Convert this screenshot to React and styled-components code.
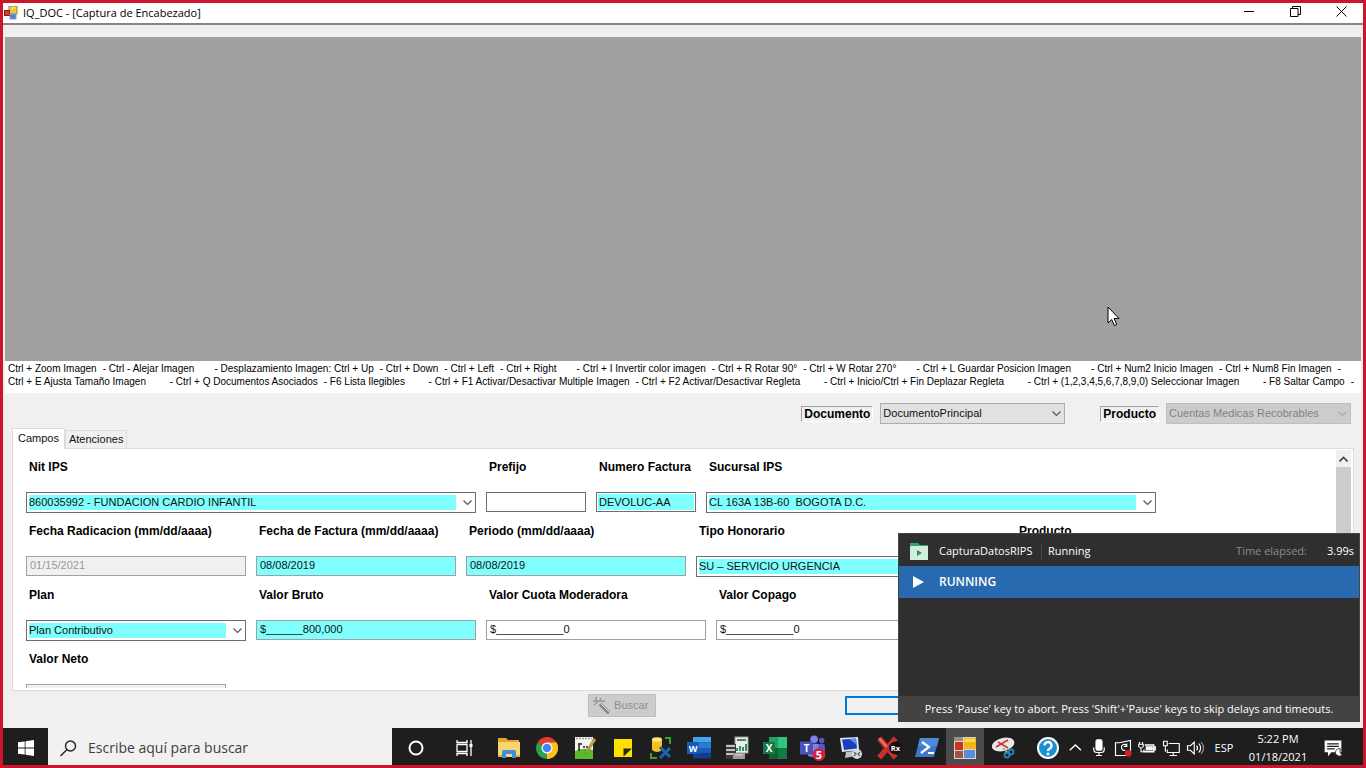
import React from "react";
import styled, { createGlobalStyle, css } from "styled-components";

const Global = createGlobalStyle`
  * { box-sizing: border-box; }
  body { margin: 0; background: #f0f0f0; }
  button, input, select { font: inherit; color: inherit; border-radius: 0; margin: 0; }
`;

const classic = '"Liberation Sans", Arial, sans-serif';
const segoe = '"Open Sans", "Noto Sans", sans-serif';

const Screen = styled.div`
  position: relative;
  display: flex;
  flex-direction: column;
  min-height: 100vh;
  border: 3px solid #cc142b;
  background: #f0f0f0;
  font: 11px/13px ${classic};
  color: #111;
`;

/* ---------- window ---------- */
const TitleBar = styled.header`
  display: flex;
  align-items: center;
  height: 22px;
  padding-left: 1px;
  background: #fff;
  border-bottom: 2px solid #858585;
`;
const Title = styled.h1`
  flex: 1;
  margin: 0 0 0 5px;
  font: 11px/16px ${segoe};
  color: #000;
`;
const WindowButton = styled.button`
  align-self: flex-start;
  width: 46px;
  height: 16px;
  padding: 0 0 0 2px;
  border: 0;
  background: none;
  display: grid;
  place-items: center;
`;
const Body = styled.main`
  flex: 1;
  display: flex;
  flex-direction: column;
  padding: 12px 2px 0;
`;
const Viewer = styled.section`
  position: relative;
  flex: 1;
  min-height: 120px;
  background: #a0a0a0;
`;
const Pointer = styled.svg`
  position: absolute;
  left: 1102px;
  top: 269px;
`;
const Hints = styled.div`
  padding: 1px 7px 5px 3px;
  background: #fff;
  font-size: 10px;
  color: #000;
`;
const HintLine = styled.p`
  display: flex;
  justify-content: space-between;
  margin: 0;
  padding-right: ${(p) => (p.$short ? 13 : 0)}px;
  white-space: nowrap;
`;
const HintGroup = styled.span`
  display: flex;
  gap: 6px;
`;

const Toolbar = styled.div`
  display: flex;
  justify-content: flex-end;
  gap: 35px;
  padding: 10px 10px 4px;
`;
const ToolGroup = styled.div`
  display: flex;
  align-items: center;
  gap: 7px;
`;
const ToolLabel = styled.label`
  padding: 0 2px;
  border: 1px solid #fff;
  border-top-color: #a0a0a0;
  border-left-color: #a0a0a0;
  font: bold 12px/14px ${classic};
  color: #000;
`;

/* ---------- fields ---------- */
const ComboFrame = styled.div`
  display: grid;
  align-items: center;
  width: ${(p) => p.$width}px;
`;
const ComboSelect = styled.select`
  grid-area: 1 / 1;
  width: 100%;
  height: 21px;
  appearance: none;
  outline: 0;
  border: 1px solid #6e6e6e;
  line-height: 15px;
  padding: 2px 19px 2px 2px;
  background: #fff;
  ${(p) => p.$tone === "cyan" && css`background: linear-gradient(#80ffff, #80ffff) content-box, #fff;`}
  ${(p) => p.$tone === "button" && css`background: #e1e1e1; border-color: #adadad;`}
  ${(p) => p.$tone === "off" && css`background: #ccc; border-color: #bfbfbf; color: #838383; opacity: 1;`}
`;
const ComboArrow = styled.svg`
  grid-area: 1 / 1;
  justify-self: end;
  margin-right: 4px;
  pointer-events: none;
`;
const TextBox = styled.input`
  width: ${(p) => p.$width}px;
  height: 20px;
  padding: 0 3px 2px;
  outline: 0;
  border: 1px solid ${(p) => (p.$dark ? "#6e6e6e" : "#a0a0a0")};
  background: ${(p) => (p.$cyan ? "#80ffff" : "#fff")};
  ${(p) => p.$dark && css`box-shadow: inset 0 0 0 1px #fff; padding: 0 2px;`}
  &:disabled { background: #f0f0f0; color: #9a9a9a; }
`;

const Tabs = styled.div`
  display: flex;
  align-items: flex-end;
  padding-left: 7px;
`;
const Tab = styled.button`
  height: ${(p) => (p.$active ? 21 : 18)}px;
  margin-bottom: ${(p) => (p.$active ? -1 : 0)}px;
  padding: ${(p) => (p.$active ? "0 5px 2px" : "0 3px")};
  border: 1px solid #dcdcdc;
  border-bottom: 0;
  background: ${(p) => (p.$active ? "#fff" : "#f0f0f0")};
  line-height: 17px;
  z-index: ${(p) => (p.$active ? 1 : 0)};
`;
const Panel = styled.section`
  display: flex;
  height: 243px;
  margin: 0 7px;
  padding: 1px 2px 2px 0;
  border: 1px solid #dcdcdc;
  background: #fff;
`;
const Form = styled.form`
  flex: 1;
  overflow: hidden;
  padding: 10px 0 0 13px;
`;
const Row = styled.div`
  display: flex;
  gap: 10px;
  height: 64px;
`;
const Field = styled.div`
  display: flex;
  flex-direction: column;
  gap: 18px;
  flex: none;
`;
const Label = styled.label`
  padding-left: 3px;
  font: bold 12px/14px ${classic};
  color: #000;
  white-space: nowrap;
`;
const Scroll = styled.div`
  width: 15px;
  background: #cdcdcd;
`;
const ScrollUp = styled.button`
  display: grid;
  place-items: center;
  width: 15px;
  height: 17px;
  padding: 0;
  border: 0;
  background: #f0f0f0;
`;
const Actions = styled.div`
  display: flex;
  gap: 189px;
  height: 37px;
  padding: 3px 0 0 43%;
`;
const SearchButton = styled.button`
  display: flex;
  align-items: center;
  gap: 3px;
  width: 68px;
  height: 23px;
  padding: 0 4px;
  border: 1px solid #bfbfbf;
  background: #ccc;
  color: #8f8f8f;
`;
const FocusButton = styled.button`
  width: 84px;
  height: 19px;
  margin-top: 2px;
  border: 2px solid #0078d7;
  background: #f0f0f0;
`;

/* ---------- run monitor ---------- */
const Monitor = styled.aside`
  position: absolute;
  right: 3px;
  bottom: 43px;
  z-index: 5;
  display: flex;
  flex-direction: column;
  width: 462px;
  height: 189px;
  border: 1px solid #454545;
  background: #2f2f2f;
  color: #fff;
  font: 11px/16px ${segoe};
`;
const MonitorHead = styled.div`
  display: flex;
  align-items: center;
  height: 32px;
  padding: 2px 5px 0 11px;
`;
const MonitorName = styled.span`
  width: 102px;
  margin-left: 11px;
  white-space: nowrap;
`;
const MonitorState = styled.span`
  flex: 1;
  padding-left: 6px;
  border-left: 1px solid #4a4a4a;
`;
const Elapsed = styled.span`
  margin-right: 20px;
  color: #8c8c8c;
`;
const MonitorStep = styled.div`
  display: flex;
  align-items: center;
  gap: 15px;
  height: 32px;
  padding-left: 14px;
  background: #2969b0;
  font-size: 12px;
  font-weight: 600;
`;
const MonitorFoot = styled.p`
  margin: auto 0 0;
  padding: 5px 0 4px;
  background: #434343;
  text-align: center;
`;

/* ---------- taskbar ---------- */
const Taskbar = styled.footer`
  display: flex;
  height: 37px;
  background: #1e1e1e;
  color: #fff;
  font: 11px/18px ${segoe};
`;
const Slot = styled.button`
  display: grid;
  place-items: center;
  flex: none;
  width: ${(p) => p.$width || 38}px;
  height: 100%;
  padding: 2px 0 0;
  border: 0;
  background: ${(p) => (p.$active ? "#4b4b4b" : "none")};
`;
const Search = styled.label`
  display: flex;
  align-items: center;
  gap: 11px;
  width: 344px;
  padding: 3px 0 0 12px;
  background: #f1f1f1;
`;
const SearchBox = styled.input`
  flex: 1;
  min-width: 0;
  padding: 0;
  border: 0;
  outline: 0;
  background: none;
  font: 14px/20px ${segoe};
  &::placeholder { color: #3f3f3f; opacity: 1; }
`;
const AppSlots = styled.nav`
  display: flex;
  padding-left: 2px;
`;
const Tray = styled.div`
  display: flex;
  margin-left: auto;
  padding-right: 6px;
`;
const Clock = styled.time`
  width: 62px;
  margin-left: 6px;
  padding-top: 2px;
  text-align: center;
`;

/* ---------- icons ---------- */
const FormIcon = () => (
  <svg width="14" height="14" viewBox="0 0 14 14">
    <rect x="5" y="0" width="8" height="8" fill="#f2c53c" stroke="#a98520" />
    <rect x="0.5" y="4.5" width="5" height="5" fill="#d8402c" stroke="#7d1c14" />
    <rect x="6" y="8" width="6" height="5" fill="#4e7fd4" stroke="#8ca0c4" />
    <path d="M1 12h4M7 2h4" stroke="#e8e8e8" />
  </svg>
);
const Chevron = ({ color = "#555" }) => (
  <ComboArrow width="9" height="6" viewBox="0 0 9 6" fill="none" stroke={color}>
    <path d="M0.5 0.5 4.5 4.5 8.5 0.5" strokeWidth="1.2" />
  </ComboArrow>
);
const Wand = () => (
  <svg width="18" height="18" viewBox="0 0 18 18" fill="none">
    <path d="M7 7l9 9" stroke="#808080" strokeWidth="3.500" />
    <path d="M7.500 6.500l9 9" stroke="#e8e8e8" />
    <path d="M0 4h5M3 0v5M8 1 6 5M1 8l4-3M7 4h5" stroke="#979797" strokeWidth="1.500" />
  </svg>
);
const Svg = ({ s = 24, children, ...p }) => (
  <svg width={s} height={s} viewBox="0 0 24 24" fill="none" {...p}>{children}</svg>
);
const glyph = { fontFamily: segoe, fontWeight: 700, fill: "#fff", textAnchor: "middle" };

const Explorer = () => (
  <Svg>
    <path d="M1 2h8l2 2h11v4H1z" fill="#e5a62b" />
    <path d="M1 6h22v15H1z" fill="#f9d56e" />
    <path d="M5 22v-6q0-2 2-2h10q2 0 2 2v6h-4v-4H9v4z" fill="#3f8fdc" />
    <path d="M1 20h4M19 20h4" stroke="#e6b246" strokeWidth="2" />
  </Svg>
);
const Chrome = () => (
  <Svg>
    <path d="M12 12 2.5 6.500A11 11 0 0 1 21.500 6.500z" fill="#e33b2e" />
    <path d="M12 12 21.500 6.500A11 11 0 0 1 12 23z" fill="#fbc116" />
    <path d="M12 12 12 23A11 11 0 0 1 2.500 6.500z" fill="#2ba24c" />
    <path d="M12 6.500h9.500A11 11 0 0 1 12 23l5-8z" fill="#fbc116" />
    <circle cx="12" cy="12" r="5.500" fill="#fff" />
    <circle cx="12" cy="12" r="4.300" fill="#4285f4" />
  </Svg>
);
const NotepadPlus = () => (
  <Svg>
    <rect x="2" y="1" width="18" height="22" fill="#f5f5f0" />
    <path d="M2 15q9-4 18-1v9H2z" fill="#59b82b" />
    <path d="M3 2.500h16" stroke="#9a9a9a" strokeWidth="1.500" strokeDasharray="2 1" />
    <path d="M6 7v8M6 8h3M10 11h2M13 11h2" stroke="#222" strokeWidth="1.500" />
    <path d="M21 2 13 15l-1 3 3-2 8-12z" fill="#c3a23a" stroke="#7c7136" strokeWidth=".5" />
  </Svg>
);
const StickyNote = () => (
  <Svg>
    <path d="M3 3h18v18H3z" fill="#ffe100" />
    <path d="M12.500 20.500v-8H21z" fill="#2b2710" />
  </Svg>
);
const DatabaseTool = () => (
  <Svg>
    <path d="M3 3v11q5 4 10 0V3z" fill="#f0c020" />
    <ellipse cx="8" cy="3.500" rx="5" ry="2.300" fill="#ffe777" />
    <path d="M16 2h5v6M2 17v5h6" stroke="#3f9d2f" strokeWidth="2" />
    <path d="m11 11 10 10M21 12 11 22" stroke="#1766b1" strokeWidth="3" />
  </Svg>
);
const Word = () => (
  <Svg>
    <rect x="6" y="1" width="18" height="5.500" fill="#41a5ee" />
    <rect x="6" y="6.500" width="18" height="5.500" fill="#2b7cd3" />
    <rect x="6" y="12" width="18" height="5.500" fill="#185abd" />
    <rect x="6" y="17.500" width="18" height="5" fill="#103f91" />
    <rect x="0" y="6" width="12" height="12" fill="#185abd" />
    <text x="6" y="15.500" fontSize="9" {...glyph}>W</text>
  </Svg>
);
const ServerReport = () => (
  <Svg>
    <rect x="10" y="1" width="13" height="16" fill="#ececec" stroke="#999" />
    <path d="M12 4h9" stroke="#4d8a5b" strokeWidth="2" />
    <path d="M12 15v-3M15 15v-5M18 15v-4M21 15V8" stroke="#2f9257" strokeWidth="2" />
    <path d="M1 8h10v15H1z" fill="#3b3b3b" />
    <path d="M1 10h9M1 14h9M1 18h9" stroke="#eee" strokeWidth="1.700" />
    <path d="M8 17h12v6H8z" fill="#9b9b9b" /><path d="M10 19h8" stroke="#ddd" />
  </Svg>
);
const Excel = () => (
  <Svg>
    <path d="M6 1h9v11H6z" fill="#21a366" /><path d="M15 1h9v11h-9z" fill="#33c481" />
    <path d="M6 12h9v11H6z" fill="#185c37" /><path d="M15 12h9v11h-9z" fill="#107c41" />
    <rect x="0" y="6" width="12" height="12" fill="#107c41" />
    <text x="6" y="15.500" fontSize="10" {...glyph}>X</text>
  </Svg>
);
const Teams = () => (
  <Svg s={26}>
    <circle cx="13" cy="4" r="3.500" fill="#7b83eb" /><circle cx="20" cy="5" r="2.500" fill="#5059c9" />
    <rect x="7" y="8" width="12" height="12" rx="3" fill="#7b83eb" /><rect x="17" y="8" width="6" height="9" rx="2" fill="#5059c9" />
    <rect x="0" y="6" width="12" height="12" fill="#4b53bc" />
    <text x="6" y="15.500" fontSize="9" {...glyph}>T</text>
    <circle cx="17.500" cy="18" r="6" fill="#d5213f" />
    <text x="17.500" y="22" fontSize="10" {...glyph}>5</text>
  </Svg>
);
const RemotePc = () => (
  <Svg>
    <path d="m1 2 18-1 1 13-17 2z" fill="#dfe7f2" />
    <path d="m3 3.500 14-1 1 10-13 1.500z" fill="#1a3fbd" />
    <path d="m10 3 7-.5.500 6z" fill="#5e8ff0" />
    <path d="m7 16 8-1 2 5-11 2z" fill="#bcc2cb" />
    <circle cx="18" cy="18" r="5" fill="#dcdcdc" />
    <path d="m15 16 2 2-2 2M21 16l-2 2 2 2" stroke="#5d5d5d" strokeWidth="1.300" />
  </Svg>
);
const RedCross = () => (
  <Svg s={26}>
    <path d="m3 3 15 18M18 3 3 21" stroke="#c92e2a" strokeWidth="5" />
    <path d="m3 3 7 8" stroke="#ee7468" strokeWidth="2" />
    <circle cx="18" cy="12" r="6" fill="#161010" />
    <text x="18" y="15" fontSize="7" {...glyph}>Rx</text>
  </Svg>
);
const PowerShell = () => (
  <Svg>
    <path d="M5 2h19l-5 19H0z" fill="#3c78c8" /><path d="M5 2h19l-2 8H3z" fill="#4d8bd8" />
    <path d="m7 6 7 5-8 6M13 17h6" stroke="#fff" strokeWidth="2.200" />
  </Svg>
);
const ActiveApp = () => (
  <Svg>
    <rect x="1" y="1" width="22" height="22" fill="#ded6c5" />
    <rect x="11" y="2" width="12" height="11" fill="#f5b515" /><path d="M12 3h10v3H12z" fill="#ffdc63" />
    <rect x="2" y="6" width="8" height="8" fill="#c8351f" />
    <rect x="2" y="15" width="8" height="7" fill="#9d5443" />
    <rect x="11" y="14" width="11" height="8" fill="#588ddd" /><path d="M1 1h9v4H1z" fill="#9d8c89" />
  </Svg>
);
const Snip = () => (
  <Svg>
    <ellipse cx="12" cy="8.500" rx="11.500" ry="6.500" fill="#ebe7e7" transform="rotate(-14 12 8)" />
    <path d="m5 11 12-7M7 6l10 6" stroke="#c83b3b" strokeWidth="1.700" />
    <path d="m12 12 5 5" stroke="#b5b5b5" strokeWidth="2" />
    <circle cx="16" cy="19" r="2.500" stroke="#2488b4" strokeWidth="1.800" /><circle cx="20" cy="16" r="2.500" stroke="#2488b4" strokeWidth="1.800" />
  </Svg>
);
const Help = () => (
  <Svg>
    <circle cx="12" cy="12" r="10" fill="#1b8fd1" stroke="#fff" strokeWidth="2" />
    <path d="M8.500 9.500a3.500 3.500 0 1 1 5 3.200q-1.500 1-1.500 2.300" stroke="#fff" strokeWidth="2.400" />
    <circle cx="12" cy="18" r="1.400" fill="#fff" />
  </Svg>
);
const line = { s: 18, stroke: "#fff", strokeWidth: 1.5 };
const ChevronUp = () => <Svg {...line}><path d="m5 15 7.500-7L20 15" strokeWidth="1.800" /></Svg>;
const Mic = () => (
  <Svg {...line}><rect x="8" y="1" width="8" height="14" rx="2" fill="#fff" /><path d="M5 11v3q0 4 4 4h6q4 0 4-4v-3M12 18v4M8 22h8" /></Svg>
);
const SyncBox = () => (
  <Svg {...line} s={18}><path d="M7 5H2v17h14M7 5l15-3v15" /><path d="M17 9q-5-4-7 1 0 6 5 5M13 10h4V6" /><circle cx="19" cy="19" r="4.500" fill="#d52122" stroke="none" /></Svg>
);
const Battery = () => (
  <Svg {...line} s={18}><path d="M9 8h12v9H8v-3M21 10.500h2v4h-2" strokeWidth="1.800" /><path d="M11 10.500h8v4h-8z" fill="#fff" /><path d="M2 4v3M6 4v3M1 7h6v3q-3 4-6 0zM4 12v5h4" /></Svg>
);
const Network = () => (
  <Svg {...line} s={18}><path d="M9 6h14v12H7v-4M15 18v4M10 22h10" /><path d="M2 3h5v6H2zM4.500 9v8" /></Svg>
);
const Speaker = () => (
  <Svg {...line}><path d="M2 9h4l5-5v16l-5-5H2z" /><path d="M14 9q3 3 0 6M17 6q5 6 0 12" /><path d="M20 4q7 8 0 16" stroke="#999" /></Svg>
);
const Notice = () => (
  <Svg s={20}><path d="M2 3h20v14H10l-4 5v-5H2z" fill="#fff" /><path d="M5 7h14M5 10h14M5 13h9" stroke="#1e1e1e" strokeWidth="1.300" /><path d="M21 13a4.500 4.500 0 1 0 2 7 5 5 0 0 1-2-7" fill="#fff" stroke="#1e1e1e" /></Svg>
);

const apps = [
  ["Explorador de archivos", Explorer], ["Google Chrome", Chrome], ["Notepad++", NotepadPlus],
  ["Notas", StickyNote], ["Base de datos", DatabaseTool], ["Word", Word], ["Servidor", ServerReport],
  ["Excel", Excel], ["Teams", Teams], ["Escritorio remoto", RemotePc], ["Rx", RedCross],
  ["PowerShell", PowerShell], ["IQ_DOC", ActiveApp, true], ["Recortes", Snip],
];
const tray = [
  ["Mostrar iconos ocultos", ChevronUp], ["Micrófono", Mic], ["Sincronización", SyncBox],
  ["Batería", Battery], ["Red", Network], ["Volumen", Speaker],
];

const hints = [
  [
    ["Ctrl + Zoom Imagen", "- Ctrl - Alejar Imagen"],
    ["- Desplazamiento Imagen: Ctrl + Up", "- Ctrl + Down", "- Ctrl + Left", "- Ctrl + Right"],
    ["- Ctrl + I Invertir color imagen", "- Ctrl + R Rotar 90°", "- Ctrl + W Rotar 270°"],
    ["- Ctrl + L Guardar Posicion Imagen"],
    ["- Ctrl + Num2 Inicio Imagen", "- Ctrl + Num8 Fin Imagen", "-"],
  ],
  [
    ["Ctrl + E Ajusta Tamaño Imagen"],
    ["- Ctrl + Q Documentos Asociados", "- F6 Lista Ilegibles"],
    ["- Ctrl + F1 Activar/Desactivar Multiple Imagen", "- Ctrl + F2 Activar/Desactivar Regleta"],
    ["- Ctrl + Inicio/Ctrl + Fin Deplazar Regleta"],
    ["- Ctrl + (1,2,3,4,5,6,7,8,9,0) Seleccionar Imagen"],
    ["- F8 Saltar Campo", "-"],
  ],
];

const rows = [
  [
    { label: "Nit IPS", width: 450, combo: true, value: "860035992 - FUNDACION CARDIO INFANTIL" },
    { label: "Prefijo", width: 100, dark: true, value: "" },
    { label: "Numero Factura", width: 100, dark: true, cyan: true, value: "DEVOLUC-AA" },
    { label: "Sucursal IPS", width: 450, combo: true, value: "CL 163A 13B-60\u00a0 BOGOTA D.C." },
  ],
  [
    { label: "Fecha Radicacion (mm/dd/aaaa)", width: 220, disabled: true, value: "01/15/2021" },
    { label: "Fecha de Factura (mm/dd/aaaa)", width: 200, cyan: true, value: "08/08/2019" },
    { label: "Periodo (mm/dd/aaaa)", width: 220, cyan: true, value: "08/08/2019" },
    { label: "Tipo Honorario", width: 310, combo: true, value: "SU – SERVICIO URGENCIA" },
    { label: "Producto", width: 220, cyan: true, value: "" },
  ],
  [
    { label: "Plan", width: 220, combo: true, value: "Plan Contributivo" },
    { label: "Valor Bruto", width: 220, cyan: true, value: "$______800,000" },
    { label: "Valor Cuota Moderadora", width: 220, value: "$___________0" },
    { label: "Valor Copago", width: 220, value: "$___________0" },
  ],
  [{ label: "Valor Neto", width: 200, disabled: true, value: "" }],
];

function Combo({ id, width, value, tone = "cyan", disabled }) {
  return (
    <ComboFrame $width={width}>
      <ComboSelect id={id} $tone={tone} disabled={disabled} defaultValue={value}>
        <option>{value}</option>
      </ComboSelect>
      <Chevron color={disabled ? "#aaa" : "#555"} />
    </ComboFrame>
  );
}

function FormField({ id, f }) {
  return (
    <Field>
      <Label htmlFor={id}>{f.label}</Label>
      {f.combo ? (
        <Combo id={id} width={f.width} value={f.value} />
      ) : (
        <TextBox id={id} $width={f.width} $cyan={f.cyan} $dark={f.dark} disabled={f.disabled} defaultValue={f.value} />
      )}
    </Field>
  );
}

export default function App() {
  return (
    <Screen>
      <Global />
      <TitleBar>
        <FormIcon />
        <Title>IQ_DOC - [Captura de Encabezado]</Title>
        <WindowButton aria-label="Minimizar">
          <svg width="11" height="11"><path d="M0 5.500h10" stroke="#000" /></svg>
        </WindowButton>
        <WindowButton aria-label="Restaurar">
          <svg width="11" height="11" fill="none" stroke="#000"><path d="M.5 2.500h7.500v8H.5zM2.500 2.500v-2h8v8H8" /></svg>
        </WindowButton>
        <WindowButton aria-label="Cerrar">
          <svg width="11" height="11" stroke="#000"><path d="m.5.500 10 10M10.500.500l-10 10" /></svg>
        </WindowButton>
      </TitleBar>

      <Body>
        <Viewer aria-label="Imagen">
          <Pointer width="13" height="21" viewBox="0 0 13 21">
            <path d="M1 1v16l3.700-3.500L7.300 19.500l2.400-1-2.600-6H12z" fill="#fff" stroke="#000" />
          </Pointer>
        </Viewer>
        <Hints>
          {hints.map((groups, i) => (
            <HintLine key={i} $short={i === 0}>
              {groups.map((keys) => (
                <HintGroup key={keys[0]}>{keys.map((t) => <span key={t}>{t}</span>)}</HintGroup>
              ))}
            </HintLine>
          ))}
        </Hints>
        <Toolbar>
          <ToolGroup>
            <ToolLabel htmlFor="documento">Documento</ToolLabel>
            <Combo id="documento" width={185} tone="button" value="DocumentoPrincipal" />
          </ToolGroup>
          <ToolGroup>
            <ToolLabel htmlFor="producto">Producto</ToolLabel>
            <Combo id="producto" width={185} tone="off" disabled value="Cuentas Medicas Recobrables" />
          </ToolGroup>
        </Toolbar>
        <Tabs role="tablist">
          <Tab role="tab" aria-selected="true" $active>Campos</Tab>
          <Tab role="tab" aria-selected="false">Atenciones</Tab>
        </Tabs>
        <Panel>
          <Form>
            {rows.map((row, r) => (
              <Row key={r}>
                {row.map((f, c) => <FormField key={f.label} id={`campo-${r}-${c}`} f={f} />)}
              </Row>
            ))}
          </Form>
          <Scroll>
            <ScrollUp aria-label="Subir">
              <svg width="9" height="6" fill="none" stroke="#444" strokeWidth="1.600"><path d="m.5 5.500 4-4 4 4" /></svg>
            </ScrollUp>
          </Scroll>
        </Panel>
        <Actions>
          <SearchButton disabled><Wand />Buscar</SearchButton>
          <FocusButton aria-label="Guardar" />
        </Actions>
      </Body>

      <Monitor>
        <MonitorHead>
          <svg width="18" height="17" viewBox="0 0 18 17">
            <path d="M0 0h8l2 2h8v15H0z" fill="#38a36b" /><path d="M1 3h17v14H0V4z" fill="#cfeedd" />
            <path d="M7 7v6l5-3z" fill="#3c8a5f" />
          </svg>
          <MonitorName>CapturaDatosRIPS</MonitorName>
          <MonitorState>Running</MonitorState>
          <Elapsed>Time elapsed:</Elapsed>
          <span>3.99s</span>
        </MonitorHead>
        <MonitorStep>
          <svg width="11" height="12"><path d="M0 0v12l11-6z" fill="#fff" /></svg>
          RUNNING
        </MonitorStep>
        <MonitorFoot>Press 'Pause' key to abort. Press 'Shift'+'Pause' keys to skip delays and timeouts.</MonitorFoot>
      </Monitor>

      <Taskbar>
        <Slot $width={45} aria-label="Inicio">
          <svg width="16" height="16" viewBox="0 0 16 16" fill="#fff">
            <path d="M0 2.300 6.700 1.400v6.200H0zM7.500 1.300 16 0v7.600H7.500zM0 8.400h6.700v6.200L0 13.700zM7.500 8.400H16V16l-8.500-1.300z" />
          </svg>
        </Slot>
        <Search>
          <svg width="17" height="17" fill="none" stroke="#222" strokeWidth="1.400"><circle cx="10.500" cy="6" r="5" /><path d="M7 9.500.5 16" /></svg>
          <SearchBox placeholder="Escribe aquí para buscar" aria-label="Buscar" />
        </Search>
        <Slot $width={48} aria-label="Cortana">
          <svg width="16" height="16" fill="none" stroke="#fff" strokeWidth="2"><circle cx="8" cy="8" r="6.500" /></svg>
        </Slot>
        <Slot $width={48} aria-label="Vista de tareas">
          <svg width="17" height="16" fill="none" stroke="#fff" strokeWidth="1.300">
            <path d="M1 0v2.500h10V0M1 4.500h10v7H1zM1 16v-2.500h10V16M15 0v16" /><path d="M13.500 4h3v3h-3z" fill="#fff" stroke="none" />
          </svg>
        </Slot>
        <AppSlots>
          {apps.map(([name, Icon, active]) => (
            <Slot key={name} aria-label={name} $active={active}><Icon /></Slot>
          ))}
        </AppSlots>
        <Tray>
          <Slot $width={30} aria-label="Ayuda"><Help /></Slot>
          {tray.map(([name, Icon]) => (
            <Slot key={name} $width={24} aria-label={name}><Icon /></Slot>
          ))}
          <Slot $width={34}>ESP</Slot>
          <Clock>5:22 PM<br />01/18/2021</Clock>
          <Slot $width={48} aria-label="Notificaciones"><Notice /></Slot>
        </Tray>
      </Taskbar>
    </Screen>
  );
}
